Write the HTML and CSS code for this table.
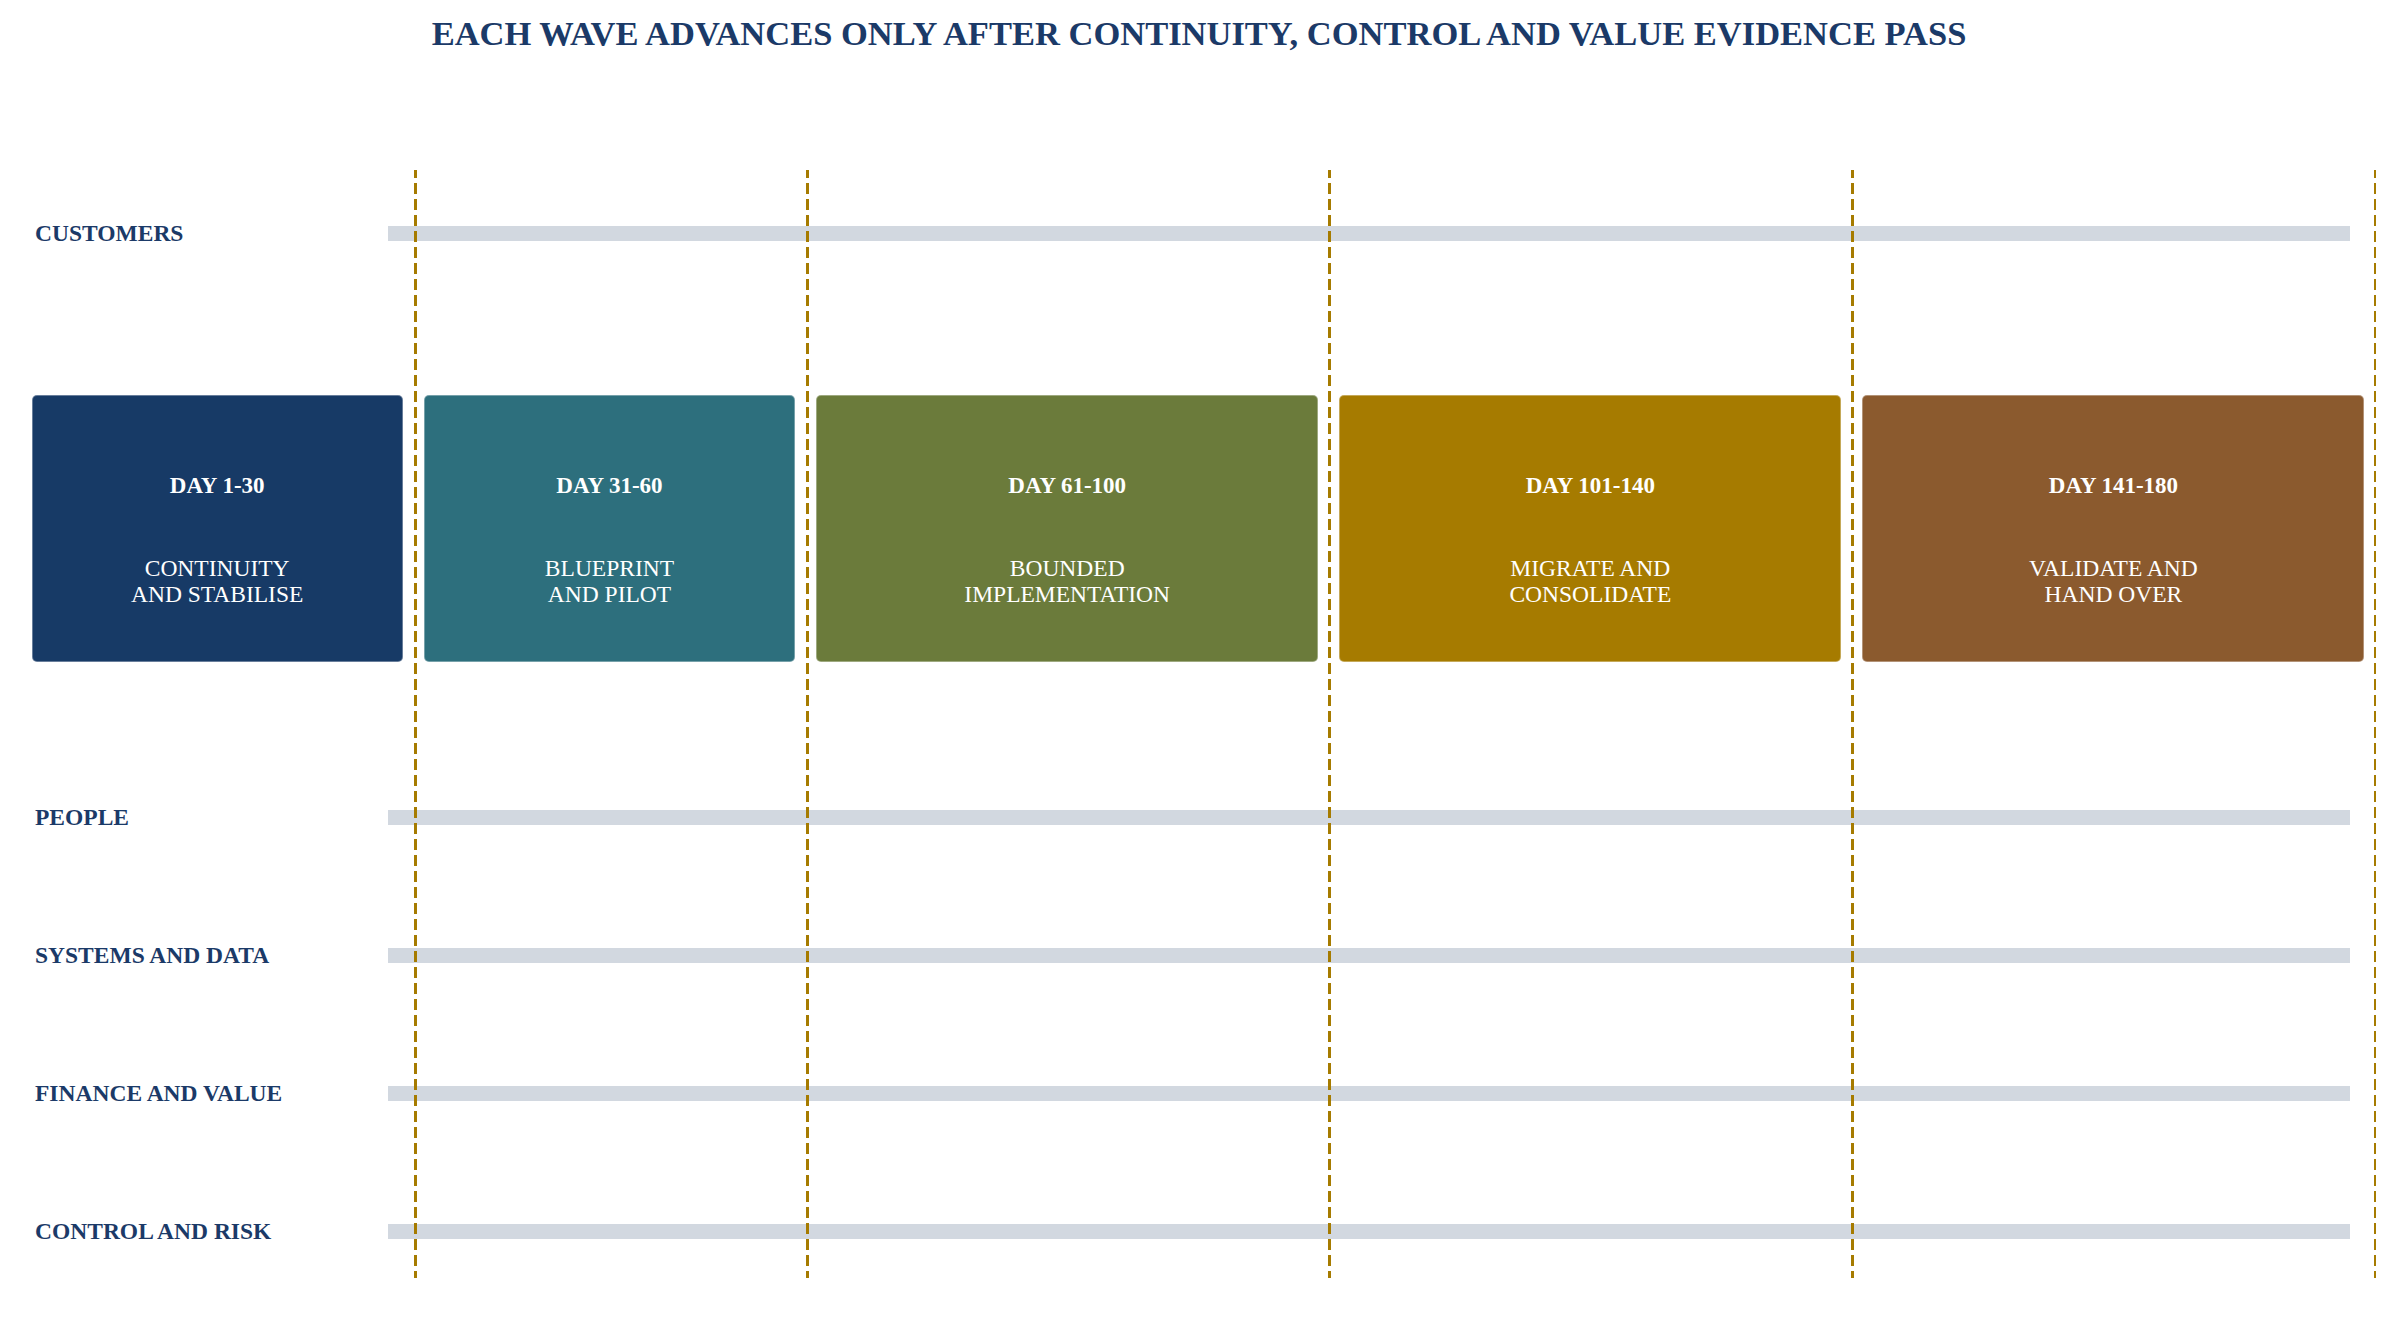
FILE: index.html
```html
<!DOCTYPE html>
<html lang="en">
<head>
<meta charset="utf-8">
<title>Wave plan</title>
<link rel="stylesheet" href="styles.css">
</head>
<body>
<h1 class="title">EACH WAVE ADVANCES ONLY AFTER CONTINUITY, CONTROL AND VALUE EVIDENCE PASS</h1>
<div class="chart">
  <div class="lane lane-top">
    <div class="lane-label">CUSTOMERS</div>
    <div class="lane-bar"></div>
  </div>
  <div class="phases">
    <div class="phase"><div class="box box-navy"><div class="box-day">DAY 1-30</div><div class="box-name">CONTINUITY<br>AND STABILISE</div></div></div>
    <div class="phase"><div class="box box-teal"><div class="box-day">DAY 31-60</div><div class="box-name">BLUEPRINT<br>AND PILOT</div></div></div>
    <div class="phase"><div class="box box-olive"><div class="box-day">DAY 61-100</div><div class="box-name">BOUNDED<br>IMPLEMENTATION</div></div></div>
    <div class="phase"><div class="box box-gold"><div class="box-day">DAY 101-140</div><div class="box-name">MIGRATE AND<br>CONSOLIDATE</div></div></div>
    <div class="phase"><div class="box box-brown"><div class="box-day">DAY 141-180</div><div class="box-name">VALIDATE AND<br>HAND OVER</div></div></div>
  </div>
  <div class="lane lane-people">
    <div class="lane-label">PEOPLE</div>
    <div class="lane-bar"></div>
  </div>
  <div class="lane">
    <div class="lane-label">SYSTEMS AND DATA</div>
    <div class="lane-bar"></div>
  </div>
  <div class="lane">
    <div class="lane-label">FINANCE AND VALUE</div>
    <div class="lane-bar"></div>
  </div>
  <div class="lane">
    <div class="lane-label">CONTROL AND RISK</div>
    <div class="lane-bar"></div>
  </div>
  <div class="gates">
    <div class="gate"></div>
    <div class="gate"></div>
    <div class="gate"></div>
    <div class="gate"></div>
    <div class="gate gate-last"></div>
  </div>
</div>
</body>
</html>
```
FILE: styles.css
```css
html, body {
  margin: 0;
  padding: 0;
  background: #ffffff;
}

body {
  width: 2398px;
  font-family: "Liberation Serif", "Times New Roman", serif;
  color: #1b3a68;
}

.title {
  margin: 16px 0 0 0;
  font-size: 34.5px;
  line-height: 34px;
  font-weight: bold;
  text-align: center;
  color: #1b3a68;
}

.chart {
  position: relative;
  margin-top: 120px;
  padding: 48px 0 32px 0;
}

.lane {
  display: flex;
  align-items: center;
  height: 30px;
  padding-left: 35px;
  margin-top: 108px;
}

.lane-top {
  margin-top: 0;
}

.lane-people {
  margin-top: 140px;
}

.lane-label {
  width: 353px;
  font-size: 23.5px;
  line-height: 28px;
  margin-bottom: 1px;
  font-weight: bold;
  color: #1b3a68;
  white-space: nowrap;
}

.lane-bar {
  width: 1962px;
  height: 15px;
  background: #d2d8e0;
}

.phases {
  display: grid;
  grid-template-columns: 30fr 30fr 40fr 40fr 40fr;
  margin: 147px 0 0 21px;
  width: 2354px;
}

.phase {
  padding: 0 10.5px;
}

.box {
  box-sizing: border-box;
  height: 267px;
  border-radius: 5px;
  border: 1px solid rgba(255, 255, 255, 0.35);
  padding-top: 76.5px;
  display: flex;
  flex-direction: column;
  align-items: center;
  text-align: center;
  color: #ffffff;
}

.box-day {
  font-size: 23px;
  line-height: 26px;
  font-weight: bold;
}

.box-name {
  margin-top: 56px;
  font-size: 23.5px;
  line-height: 26px;
}

.box-navy { background: #173a66; }
.box-teal { background: #2d6f7d; }
.box-olive { background: #6b7b3b; }
.box-gold { background: #a67b00; }
.box-brown { background: #8b5a2e; }

.gates {
  position: absolute;
  top: 0;
  bottom: 0;
  left: 23px;
  width: 2352px;
  display: grid;
  grid-template-columns: 30fr 30fr 40fr 40fr 40fr;
  pointer-events: none;
}

.gate {
  position: relative;
}

.gate::after {
  content: "";
  position: absolute;
  top: 0;
  bottom: 0;
  right: -1.5px;
  width: 3px;
  background: repeating-linear-gradient(to bottom, #a67b00 0 11px, transparent 11px 16px);
  background-position: 0 -3px;
}

.gate-last::after {
  right: -0.75px;
  width: 1.5px;
}
```
